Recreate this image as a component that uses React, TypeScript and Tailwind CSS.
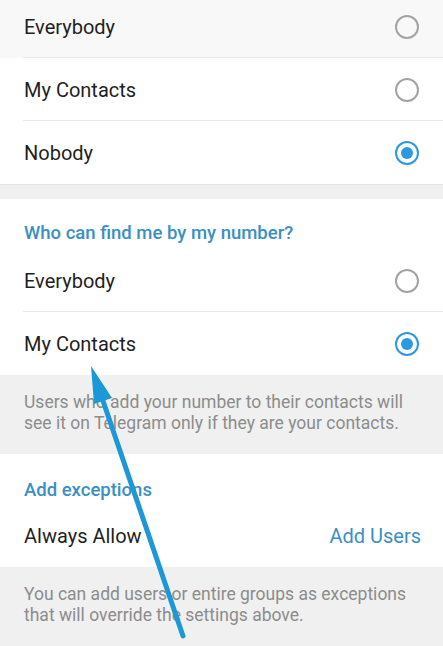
import React from 'react';

type Option = { label: string; checked?: boolean };

const Radio: React.FC<{ checked?: boolean }> = ({ checked }) => (
  <div
    className={`w-[24px] h-[24px] rounded-full border-[2px] flex items-center justify-center ${
      checked ? 'border-[#2c9ae0]' : 'border-[#a3a3a3]'
    }`}
  >
    {checked && <div className="w-[12px] h-[12px] rounded-full bg-[#2c9ae0]" />}
  </div>
);

const OptionRow: React.FC<Option & { last?: boolean; first?: boolean }> = ({ label, checked, last, first }) => (
  <div className={`relative flex items-center justify-between pl-[24px] pr-[24px] h-[63px] ${first ? 'bg-[#f8f8f8]' : ''}`}>
    <span className="text-[20px] text-[#1f1f1f]">{label}</span>
    <Radio checked={checked} />
    {!last && <div className="absolute left-[23px] right-0 bottom-0 h-px bg-[#e8e8e8]" />}
  </div>
);

const Gap: React.FC = () => (
  <div className="h-[15px] bg-[#f0f0f0] border-t border-[#e4e4e4]" />
);

export default function App() {
  return (
    <div className="relative w-[443px] h-[646px] overflow-hidden bg-white" style={{ fontFamily: 'Roboto, "Noto Sans", sans-serif' }}>
      {/* Section 1 */}
      <div className="-mt-[5px]">
        <OptionRow label="Everybody" first />
        <OptionRow label="My Contacts" />
        <OptionRow label="Nobody" checked last />
      </div>
      <Gap />

      {/* Section 2 */}
      <div>
        <div className="pl-[24px] pt-[23px] pb-[5px] text-[18.5px] leading-[22px] font-medium text-[#3b8fc3]">
          Who can find me by my number?
        </div>
        <OptionRow label="Everybody" />
        <OptionRow label="My Contacts" checked last />
      </div>
      <div className="bg-[#f0f0f0] px-[24px] pt-[17px] pb-[21px] text-[17.5px] leading-[20.5px] text-[#8c8c8c]">
        Users who add your number to their contacts will see it on Telegram only if they are your contacts.
      </div>

      {/* Section 3 */}
      <div>
        <div className="pl-[24px] pt-[25px] pb-[4px] text-[18.5px] leading-[22px] font-medium text-[#3b8fc3]">
          Add exceptions
        </div>
        <div className="flex items-center justify-between pl-[24px] pr-[22px] h-[62px]">
          <span className="text-[20px] text-[#1f1f1f]">Always Allow</span>
          <span className="text-[20px] text-[#3b8fc3]">Add Users</span>
        </div>
      </div>
      <div className="bg-[#f0f0f0] px-[24px] pt-[17px] pb-[30px] text-[17.5px] leading-[20.5px] text-[#8c8c8c]">
        You can add users or entire groups as exceptions that will override the settings above.
      </div>

      {/* Annotation arrow */}
      <svg className="absolute left-0 top-0 pointer-events-none" width="443" height="646" viewBox="0 0 443 646">
        <line x1="183" y1="636" x2="100" y2="392" stroke="#1c98d6" strokeWidth="5" strokeLinecap="round" />
        <polygon points="91,366 112,398 94,404" fill="#1c98d6" />
      </svg>
    </div>
  );
}
